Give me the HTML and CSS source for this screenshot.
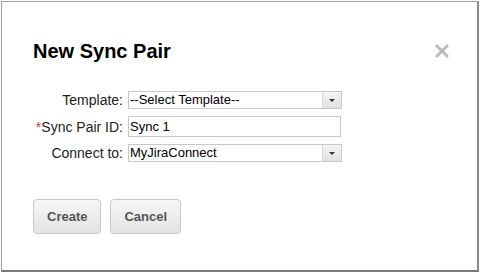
FILE: index.html
```html
<!DOCTYPE html>
<html>
<head>
    <title>New Sync Pair</title>
    <link rel="stylesheet" href="styles.css">
</head>
<body>
    <div class="dialog">
        <div class="dialog-header">
            <h1>New Sync Pair</h1>
            <svg class="close" width="14" height="14" viewBox="0 0 14 14">
                <path d="M2 2 L12 12 M12 2 L2 12" stroke="#bcbcbc" stroke-width="3" stroke-linecap="square"/>
            </svg>
        </div>

        <div class="form">
            <div class="form-row">
                <label>Template:</label>
                <div class="select">
                    <span>--Select Template--</span>
                    <span class="arrow"></span>
                </div>
            </div>
            <div class="form-row id-row">
                <label><span class="req">*</span>Sync Pair ID:</label>
                <div class="text-input">Sync 1</div>
            </div>
            <div class="form-row">
                <label>Connect to:</label>
                <div class="select">
                    <span>MyJiraConnect</span>
                    <span class="arrow"></span>
                </div>
            </div>
        </div>

        <div class="buttons">
            <button class="btn">Create</button>
            <button class="btn">Cancel</button>
        </div>
    </div>
</body>
</html>
```

FILE: styles.css
```css
body {
    margin: 0;
    padding: 0;
    background: #fff;
    font-family: "Liberation Sans", Arial, sans-serif;
}

.dialog {
    box-sizing: border-box;
    margin: 1px 2px 0 1px;
    height: 271px;
    border: 1px solid #a0a0a0;
    border-right: 2px solid #8a8a8a;
    border-bottom: 2px solid #7a7a7a;
    background: #fff;
    padding: 0 28px 0 31px;
}

.dialog-header {
    display: flex;
    justify-content: space-between;
    align-items: center;
    height: 60px;
    padding-top: 37px;
    box-sizing: border-box;
}

.dialog-header h1 {
    margin: 0;
    font-size: 20px;
    font-weight: bold;
    color: #000;
    line-height: 24px;
}

.close {
    display: block;
    margin-top: 1px;
}

.form {
    margin-top: 29px;
    display: flex;
    flex-direction: column;
}

.form-row {
    display: flex;
    align-items: center;
    height: 17px;
}

.id-row {
    height: 21px;
    margin: 8px 0 7px;
}

.form-row label {
    width: 90px;
    text-align: right;
    font-size: 14px;
    color: #222;
    padding-right: 5px;
    white-space: nowrap;
}

.req {
    color: #d33;
}

.select {
    box-sizing: border-box;
    width: 214px;
    height: 18px;
    border: 1px solid #c8c8c8;
    display: flex;
    justify-content: space-between;
    align-items: center;
    font-size: 13px;
    color: #000;
    padding-left: 1px;
}

.arrow {
    width: 18px;
    height: 16px;
    background: linear-gradient(#f4f4f4, #e2e2e2);
    border-left: 1px solid #d8d8d8;
    position: relative;
}

.arrow::after {
    content: '';
    position: absolute;
    left: 6px;
    top: 7px;
    border-left: 3px solid transparent;
    border-right: 3px solid transparent;
    border-top: 3px solid #333;
}

.text-input {
    box-sizing: border-box;
    width: 213px;
    height: 21px;
    border: 1px solid #c8c8c8;
    font-size: 13px;
    color: #000;
    padding: 2px 0 0 1px;
    line-height: 16px;
}

.buttons {
    margin-top: 38px;
    display: flex;
    gap: 9px;
}

.btn {
    height: 35px;
    padding: 0 13px;
    border: 1px solid #c8c8c8;
    border-radius: 4px;
    background: linear-gradient(#f6f6f6, #e4e4e4);
    font-family: "Liberation Sans", Arial, sans-serif;
    font-size: 13px;
    font-weight: bold;
    color: #555;
}
```
